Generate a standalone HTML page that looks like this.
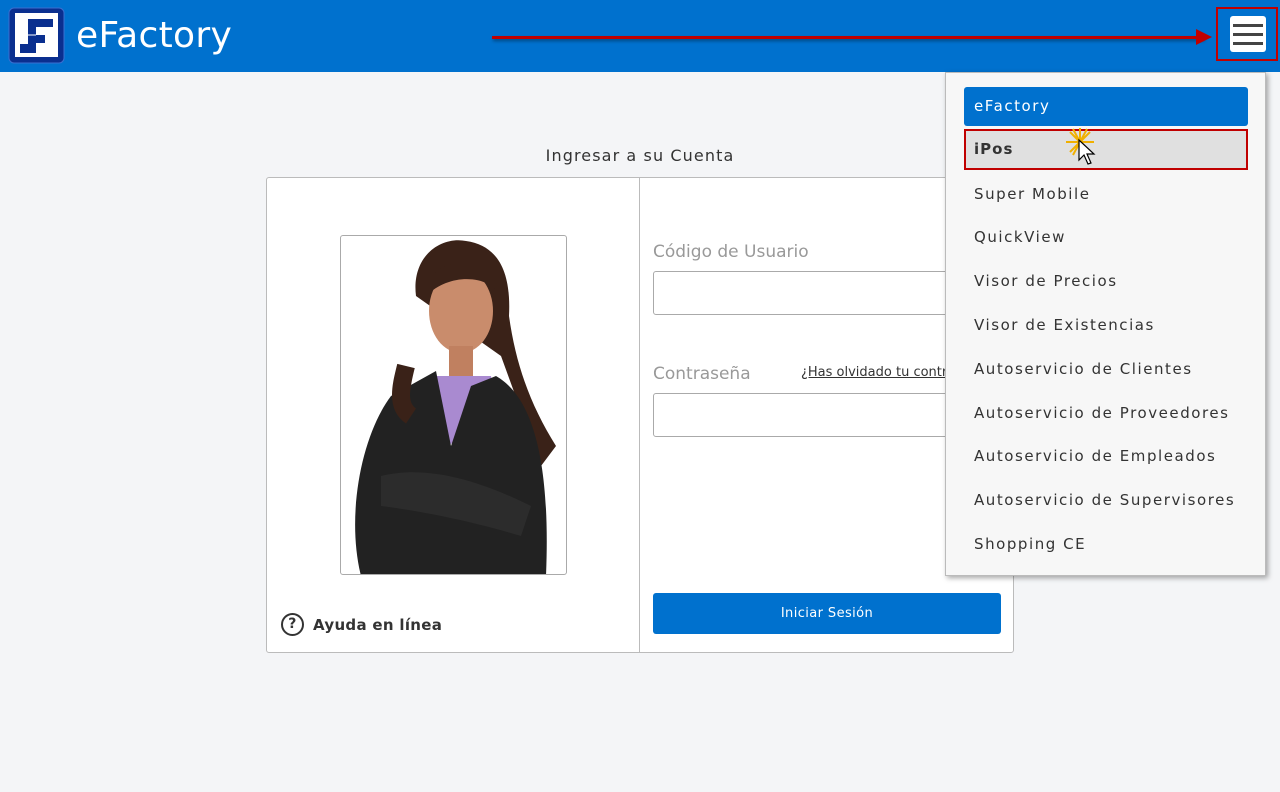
<!DOCTYPE html>
<html><head><meta charset="utf-8"><style>
*{box-sizing:border-box;margin:0;padding:0}
body{width:1280px;height:792px;overflow:hidden;background:#f4f5f7;font-family:"DejaVu Sans","Liberation Sans",sans-serif;position:relative}
.hdr{position:absolute;left:0;top:0;width:1280px;height:72px;background:#0071ce}
.title{position:absolute;left:76px;top:15px;color:#fff;font-size:36px;font-family:"DejaVu Sans",sans-serif;letter-spacing:0.3px}
.ham{position:absolute;left:1230px;top:16px;width:36px;height:36px;background:#fff;border-radius:3px}
.ham i{position:absolute;left:3px;width:30px;height:3px;background:#444}
.hbox{position:absolute;left:1216px;top:7px;width:62px;height:54px;border:2px solid #c00000}
.arrow{position:absolute;left:492px;top:36px;width:712px;height:3px;background:#c00000;box-shadow:1px 2px 3px rgba(0,0,0,.4)}
.arrowh{position:absolute;left:1196px;top:29px;width:0;height:0;border-left:16px solid #c00000;border-top:8px solid transparent;border-bottom:8px solid transparent}
.h2{position:absolute;left:0;width:1280px;top:146px;text-align:center;font-size:16px;color:#333;letter-spacing:1.1px}
.card{position:absolute;left:266px;top:177px;width:748px;height:476px;background:#fff;border:1px solid #bbb;border-radius:3px}
.div{position:absolute;left:372px;top:0;width:1px;height:474px;background:#bbb}
.photo{position:absolute;left:73px;top:57px;width:227px;height:340px;border:1px solid #aaa;border-radius:3px;background:#fff;overflow:hidden}
.lbl{position:absolute;color:#999;font-size:17px}
.inp{position:absolute;left:386px;width:360px;height:44px;border:1px solid #aaa;border-radius:3px;background:#fff}
.btn{position:absolute;left:386px;top:415px;width:348px;height:41px;background:#0071ce;border-radius:3px;color:#fff;font-size:13px;text-align:center;line-height:41px;letter-spacing:.4px}
.help{position:absolute;left:14px;top:435px;font-size:15px;font-weight:bold;color:#333;display:flex;align-items:center;letter-spacing:.3px}
.help span.q{width:23px;height:23px;border:2.5px solid #333;border-radius:50%;display:inline-block;text-align:center;line-height:18px;font-size:14px;margin-right:9px}
.menu{position:absolute;left:945px;top:72px;width:321px;height:504px;background:#f7f7f7;border:1px solid #bbb;box-shadow:2px 2px 5px rgba(0,0,0,.35)}
.mi{position:absolute;left:18px;width:284px;height:39px;font-size:15px;color:#333;letter-spacing:1.55px;padding-left:10px;line-height:39px;white-space:nowrap}
.mi.a{background:#0071ce;color:#fff;border-radius:3px}
.mi.s{background:#e0e0e0;border:2px solid #c00000;font-weight:bold;padding-left:8px;line-height:37px;letter-spacing:1px}
</style></head><body>
<div class="hdr">
 <svg style="position:absolute;left:0;top:0" width="70" height="70" viewBox="0 0 70 70">
  <rect x="9" y="8" width="55" height="55" rx="5" fill="#0a2f8f" stroke="#3a6fd0"/>
  <rect x="15" y="13" width="43" height="44" fill="#fff"/>
  <path d="M28 19H53V27H36V35H45V43H36V53H20V44H28Z" fill="#0a2f8f"/>
  <path d="M28 35H36" stroke="#fff" stroke-width="1"/>
 </svg>
 <div class="title">eFactory</div>
 <div class="arrow"></div><div class="arrowh"></div>
 <div class="hbox"></div>
 <div class="ham"><i style="top:8px"></i><i style="top:17px"></i><i style="top:26px"></i></div>
</div>
<div class="h2">Ingresar a su Cuenta</div>
<div class="card">
 <div class="photo">
  <svg width="227" height="340" viewBox="0 0 227 340">
   <path d="M75 60 C70 20 100 0 125 5 C160 10 170 40 168 80 C175 130 190 170 215 210 L200 230 L160 120 Z" fill="#3a2218"/>
   <ellipse cx="120" cy="75" rx="32" ry="42" fill="#c98c6c"/>
   <path d="M85 50 C95 20 150 15 160 60 C150 40 110 35 85 60 Z" fill="#3a2218"/>
   <rect x="108" y="110" width="24" height="30" fill="#c08060"/>
   <path d="M90 140 L150 140 L160 200 L95 210 Z" fill="#a98ad0"/>
   <path d="M20 340 C5 280 20 200 50 160 L95 135 L110 210 L130 150 L155 140 C190 160 210 220 205 340 Z" fill="#222"/>
   <path d="M40 240 C80 230 130 240 190 270 L180 300 C130 285 80 275 40 270 Z" fill="#2c2c2c"/>
   <path d="M65 130 C60 150 55 170 70 180" stroke="#3a2218" stroke-width="18" fill="none"/>
  </svg>
 </div>
 <div class="help"><span class="q">?</span>Ayuda en línea</div>
 <div class="div"></div>
 <div class="lbl" style="left:386px;top:64px">Código de Usuario</div>
 <div class="inp" style="top:93px"></div>
 <div class="lbl" style="left:386px;top:186px">Contraseña</div>
 <div style="position:absolute;left:534px;top:187px;font-size:13px;color:#333;text-decoration:underline;white-space:nowrap">¿Has olvidado tu contraseña?</div>
 <div class="inp" style="top:215px"></div>
 <div class="btn">Iniciar Sesión</div>
</div>
<div class="menu">
 <div class="mi a" style="top:14px">eFactory</div>
 <div class="mi s" style="top:56px;height:41px">iPos</div>
 <div class="mi" style="top:102px">Super Mobile</div>
 <div class="mi" style="top:145px">QuickView</div>
 <div class="mi" style="top:189px">Visor de Precios</div>
 <div class="mi" style="top:233px">Visor de Existencias</div>
 <div class="mi" style="top:277px">Autoservicio de Clientes</div>
 <div class="mi" style="top:321px">Autoservicio de Proveedores</div>
 <div class="mi" style="top:364px">Autoservicio de Empleados</div>
 <div class="mi" style="top:408px">Autoservicio de Supervisores</div>
 <div class="mi" style="top:452px">Shopping CE</div>
</div>
<svg style="position:absolute;left:1064px;top:128px" width="40" height="40" viewBox="0 0 40 40">
 <g stroke="#f0b000" stroke-width="2"><path d="M2 14H30M16 0V28M6 4L26 24M26 4L6 24M9 1L23 27M23 1L9 27"/></g>
 <path d="M15 12L15 32L20 27L24 36L27 35L23 26L30 26Z" fill="#fff" stroke="#000" stroke-width="1.2"/>
</svg>
</body></html>
